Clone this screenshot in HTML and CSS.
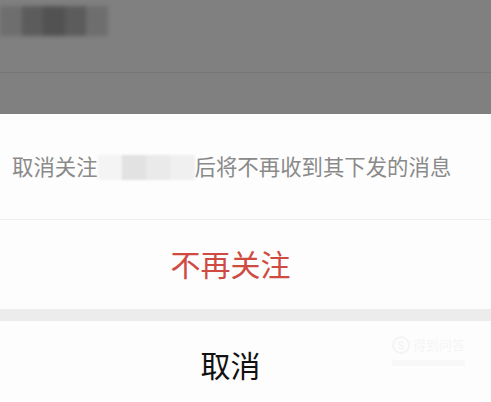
FILE: index.html
```html
<!DOCTYPE html>
<html>

<head>
    <title>取消关注</title>
    <link rel="stylesheet" href="styles.css">
</head>

<body>
    <div class="backdrop">
        <div class="backdrop-row">
            <div class="blur-name">
                <span class="px px-a"></span><span class="px px-b"></span><span class="px px-c"></span><span class="px px-b"></span><span class="px px-a"></span>
            </div>
        </div>
        <div class="backdrop-row short"></div>
    </div>
    <div class="sheet">
        <div class="message">
            取消关注<span class="blur-inline"><span class="bl bl-1"></span><span class="bl bl-2"></span><span class="bl bl-3"></span><span class="bl bl-4"></span></span>后将不再收到其下发的消息
        </div>
        <div class="action danger">不再关注</div>
        <div class="gap"></div>
        <div class="action cancel">
            取消
            <div class="watermark">
                <div class="wm-top"><span class="wm-logo">S</span>得到问答</div>
                <div class="wm-line"></div>
            </div>
        </div>
    </div>
</body>

</html>
```

FILE: styles.css
```css
body {
    margin: 0;
    padding: 0;
    width: 491px;
    height: 402px;
    overflow: hidden;
    font-family: "Noto Sans CJK SC", "Noto Sans", sans-serif;
    background-color: #ffffff;
}

.backdrop {
    height: 114px;
    background-color: #808080;
}

.backdrop-row {
    height: 73px;
    border-bottom: 1px solid #767676;
    box-sizing: border-box;
    padding-top: 6px;
}

.backdrop-row.short {
    height: 41px;
    border-bottom: none;
}

.blur-name {
    display: flex;
    width: 108px;
    height: 30px;
    filter: blur(2px);
}

.px {
    flex: 1;
    height: 100%;
}

.px-a {
    background-color: #6e6e6e;
}

.px-b {
    background-color: #5c5c5c;
}

.px-c {
    background-color: #525252;
}

.sheet {
    background-color: #fdfdfd;
}

.message {
    height: 106px;
    box-sizing: border-box;
    padding: 38px 0 0 12px;
    font-size: 21.4px;
    line-height: 28px;
    color: #8a8a8a;
    border-bottom: 1px solid #efefef;
    white-space: nowrap;
}

.blur-inline {
    display: inline-flex;
    vertical-align: middle;
    width: 97px;
    height: 25px;
    margin-top: -4px;
    filter: blur(1px);
}

.bl {
    flex: 1;
}

.bl-1 {
    background-color: #f4f4f4;
}

.bl-2 {
    background-color: #e2e2e2;
}

.bl-3 {
    background-color: #eaeaea;
}

.bl-4 {
    background-color: #f0f0f0;
}

.action {
    display: flex;
    align-items: center;
    justify-content: center;
    height: 89px;
    box-sizing: border-box;
    padding: 0 30px 4px 0;
}

.danger {
    font-size: 30px;
    color: #cf4a40;
}

.gap {
    height: 12px;
    background-color: #ececec;
}

.cancel {
    position: relative;
    height: 90px;
    font-size: 30px;
    color: #111111;
}

.watermark {
    position: absolute;
    right: 26px;
    top: 14px;
    color: #f5f5f5;
    font-size: 13px;
}

.wm-top {
    display: flex;
    align-items: center;
    gap: 3px;
}

.wm-logo {
    display: inline-flex;
    align-items: center;
    justify-content: center;
    width: 14px;
    height: 14px;
    border: 2px solid #f4f4f4;
    border-radius: 50%;
    font-size: 11px;
    font-weight: bold;
}

.wm-line {
    margin-top: 6px;
    height: 6px;
    background-color: #f8f8f8;
}
```
